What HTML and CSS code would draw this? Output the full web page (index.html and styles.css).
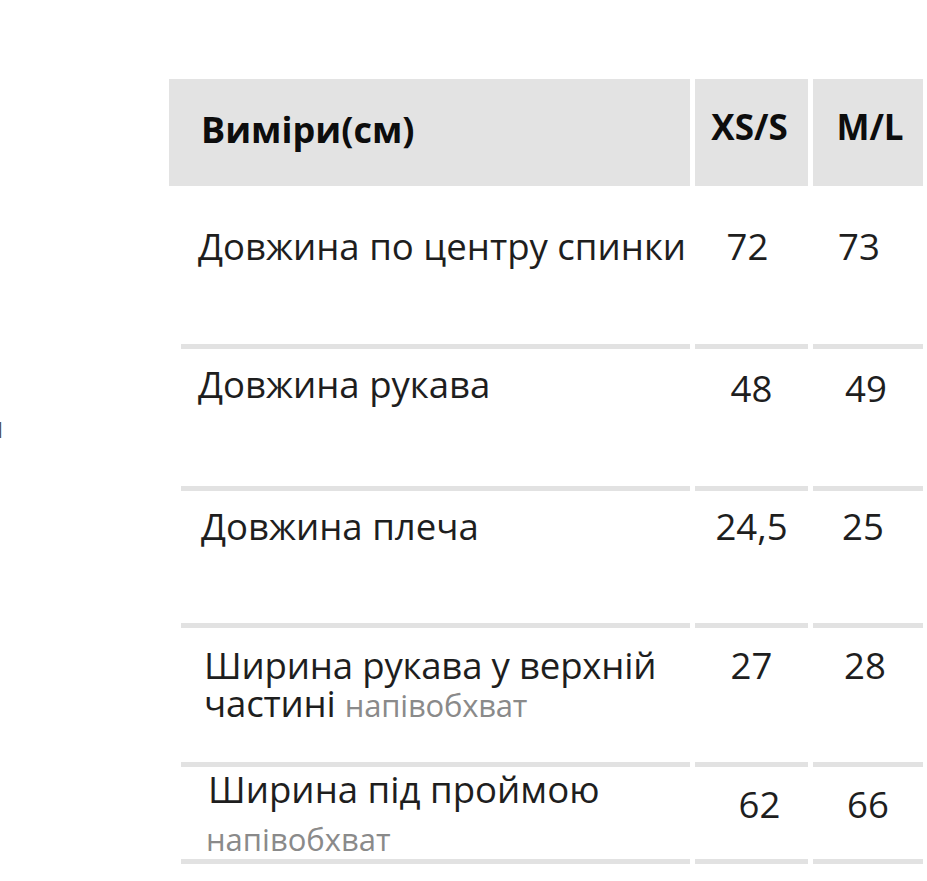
FILE: index.html
```html
<!DOCTYPE html>
<html lang="uk">
<head>
<meta charset="utf-8">
<title>Розмірна сітка</title>
<link rel="stylesheet" href="styles.css">
</head>
<body>
<div class="page">
  <div class="aside"><span class="cut">п</span></div>
  <div class="table">
    <div class="head">
      <div class="hcell hcell--label">Виміри(см)</div>
      <div class="hcell hcell--xs">XS/S</div>
      <div class="hcell hcell--ml">M/L</div>
    </div>
    <div class="row row--1">
      <div class="cell label">Довжина по центру спинки</div>
      <div class="cell num">72</div>
      <div class="cell num">73</div>
    </div>
    <div class="row row--2">
      <div class="cell label">Довжина рукава</div>
      <div class="cell num">48</div>
      <div class="cell num">49</div>
    </div>
    <div class="row row--3">
      <div class="cell label">Довжина плеча</div>
      <div class="cell num">24,5</div>
      <div class="cell num">25</div>
    </div>
    <div class="row row--4">
      <div class="cell label">Ширина рукава у верхній<br>частині <span class="note">напівобхват</span></div>
      <div class="cell num">27</div>
      <div class="cell num">28</div>
    </div>
    <div class="row row--5">
      <div class="cell label">Ширина під проймою<span class="note note--block">напівобхват</span></div>
      <div class="cell num">62</div>
      <div class="cell num">66</div>
    </div>
  </div>
</div>
</body>
</html>
```
FILE: styles.css
```css
* { box-sizing: border-box; }

html, body {
  margin: 0;
  padding: 0;
  background: #ffffff;
}

body {
  font-family: "Open Sans", "Noto Sans", sans-serif;
  color: #1e1e1e;
  overflow: hidden;
}

.page {
  display: flex;
  width: 927px;
  height: 881px;
}

.aside {
  width: 169px;
  flex: none;
  padding-top: 407px;
  overflow: hidden;
}

.cut {
  display: block;
  margin-left: -15px;
  font-size: 30px;
  line-height: 40px;
  color: #555;
}

.table {
  padding-top: 79px;
  width: 754px;
}

.head,
.row {
  display: grid;
  grid-template-columns: 521px 113px 110px;
  column-gap: 5px;
}

.hcell {
  height: 107px;
  background: #e3e3e3;
  font-weight: 700;
  font-size: 35px;
  line-height: 40px;
  color: #0d0d0d;
  padding-top: 28px;
  text-align: center;
}

.hcell--label {
  text-align: left;
  padding-left: 32px;
  padding-top: 31px;
  font-size: 36px;
}

.hcell--xs { padding-right: 4px; }
.hcell--ml { padding-left: 4px; }

.cell {
  border-bottom: 5px solid #e2e2e2;
  font-size: 36.6px;
  line-height: 38px;
  white-space: nowrap;
}

.label {
  margin-left: 12px;
  padding-left: 17px;
}

.num {
  text-align: center;
}

.note {
  color: #8a8a8a;
  font-size: 31px;
}

.note--block {
  display: block;
  margin-top: 12px;
  margin-left: -2px;
}

.row--1 .cell { height: 163px; padding-top: 41px; }
.row--1 .num:nth-child(2) { padding-right: 8px; }
.row--1 .num:nth-child(3) { padding-right: 18px; }
.row--2 .cell { height: 142px; padding-top: 16px; }
.row--2 .num  { padding-top: 20px; }
.row--2 .num:nth-child(3) { padding-right: 4px; }
.row--3 .cell { height: 137px; padding-top: 16px; }
.row--3 .label { padding-left: 20px; }
.row--3 .num:nth-child(3) { padding-right: 10px; }
.row--4 .cell { height: 139px; padding-top: 18px; }
.row--4 .label { padding-left: 23px; letter-spacing: -0.2px; }
.row--4 .num:nth-child(3) { padding-right: 6px; }
.row--5 .cell { height: 97px; padding-top: 3px; }
.row--5 .label { padding-left: 27px; }
.row--5 .num  { padding-top: 18px; }
.row--5 .num:nth-child(2) { padding-left: 16px; }
```
